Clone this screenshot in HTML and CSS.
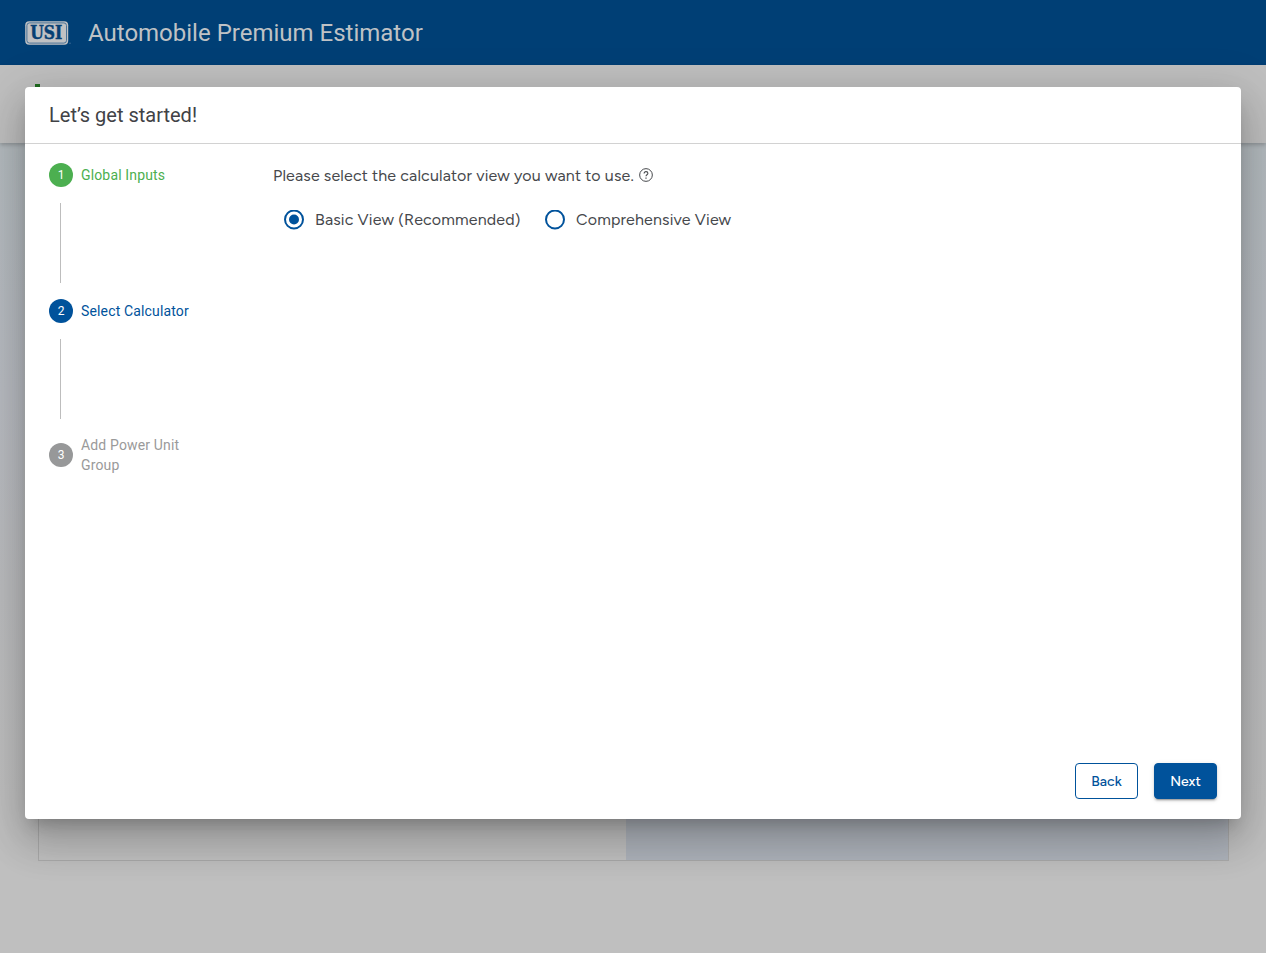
FILE: index.html
```html
<!DOCTYPE html>
<html lang="en">
<head>
<meta charset="utf-8">
<title>Automobile Premium Estimator</title>
<link rel="stylesheet" href="styles.css">
</head>
<body>
<div class="page">
  <header class="topbar">
    <svg class="logo" width="47" height="26" viewBox="0 0 47 26">
      <rect x="0.2" y="1.2" width="43" height="23.6" rx="4" fill="#c0c1c3"/>
      <rect x="1.9" y="2.9" width="39.6" height="20.2" rx="2.6" fill="none" stroke="#3c6a92" stroke-width="0.9"/>
      <text class="logo-text" x="5.2" y="19.4" textLength="32" lengthAdjust="spacingAndGlyphs">USI</text>
      <circle cx="45" cy="23.3" r="0.7" fill="#47719a"/>
    </svg>
    <h1 class="app-title">Automobile Premium Estimator</h1>
  </header>
  <div class="toolbar"><span class="accent"></span></div>
  <main class="content">
    <div class="panel"><div class="panel-left"></div><div class="panel-right"></div></div>
  </main>
</div>
<section class="dialog" role="dialog">
  <h2 class="dialog-title">Let’s get started!</h2>
  <div class="dialog-body">
    <ol class="steps">
      <li class="step done"><span class="num">1</span><span>Global Inputs</span></li>
      <li class="line"></li>
      <li class="step active"><span class="num">2</span><span>Select Calculator</span></li>
      <li class="line"></li>
      <li class="step pending"><span class="num">3</span><span>Add Power Unit Group</span></li>
    </ol>
    <div class="form">
      <div class="prompt"><span class="prompt-text">Please select the calculator view you want to use.</span>
        <svg width="14" height="14" viewBox="0 0 14 14" fill="none" stroke="#46484c"><circle cx="7" cy="7" r="6.35" stroke-width="1"/><path d="M5.1 5.5C5.1 4.3 5.9 3.6 7 3.6s1.9.7 1.9 1.7c0 1.4-1.9 1.5-1.9 3" stroke-width="1.05"/><path d="M7 9.5v1.2" stroke-width="1.2"/></svg>
      </div>
      <div class="options">
        <label class="option"><svg width="20" height="20" viewBox="0 0 20 20"><circle cx="10" cy="9.5" r="9" fill="none" stroke="#00529b" stroke-width="2"/><circle cx="10" cy="9.5" r="5" fill="#00529b"/></svg><span>Basic View (Recommended)</span></label>
        <label class="option"><svg width="20" height="20" viewBox="0 0 20 20"><circle cx="10" cy="9.5" r="9" fill="none" stroke="#00529b" stroke-width="2"/></svg><span>Comprehensive View</span></label>
      </div>
    </div>
  </div>
  <footer class="actions">
    <button class="btn outlined">Back</button>
    <button class="btn filled">Next</button>
  </footer>
</section>
</body>
</html>
```
FILE: styles.css
```css
* { box-sizing: border-box; }
body { margin: 0; font-family: Roboto, sans-serif; overflow: hidden; }
.page { height: 953px; display: flex; flex-direction: column; background: #bfbfbf; }
.topbar { height: 65px; flex: none; display: flex; align-items: center; gap: 16px; padding-left: 25px; background: #003f75; }
.logo { display: block; }
.logo-text { font: bold 18.5px "DejaVu Serif", serif; fill: #073f73; stroke: #073f73; stroke-width: .5; }
.app-title { margin: 0; font-size: 24px; font-weight: 400; line-height: 32px; color: #bfc2c5; }
.toolbar { height: 78px; flex: none; padding: 19px 0 0 35px; background: #bfbfbf; box-shadow: 0 2px 4px rgba(0,0,0,.2); z-index: 1; }
.accent { display: block; width: 5px; height: 6px; background: #1f6b20; }
.content { flex: 1; display: flex; flex-direction: column; padding: 0 37px 92px 38px; background: linear-gradient(#b3babe 0, #b8bbc1 250px, #bbbcbe 450px, #bfbfbf 660px); }
.panel { flex: 1; margin-top: 600px; display: flex; border: 1px solid #a9a9a9; }
.panel-left { width: 587px; background: #c0c0c0; }
.panel-right { flex: 1; background: #aeb3bb; }
.dialog { position: absolute; left: 25px; top: 87px; z-index: 2; width: 1216px; height: 732px; display: flex; flex-direction: column; background: #fff; border-radius: 4px; box-shadow: 0 11px 15px -7px rgba(0,0,0,.2), 0 24px 38px 3px rgba(0,0,0,.14), 0 9px 46px 8px rgba(0,0,0,.12); }
.dialog-title { margin: 0; height: 57px; flex: none; padding: 12px 24px; border-bottom: 1px solid #d2d2d2; font-size: 20px; font-weight: 400; line-height: 32px; color: #414246; }
.dialog-body { flex: 1; display: flex; padding: 19px 24px 0; }
.steps { width: 224px; margin: 0; padding: 0; list-style: none; }
.step { display: flex; align-items: center; gap: 8px; width: 150px; min-height: 24px; font-size: 14px; line-height: 20px; letter-spacing: .15px; }
.num { width: 24px; height: 24px; flex: none; border-radius: 50%; font-size: 12px; line-height: 24px; letter-spacing: 0; text-align: center; color: #fff; }
.line { width: 1px; height: 80px; margin: 16px 0 16px 11px; background: #bdbdbd; }
.done { color: #4caf50; }
.done .num { background: #4caf50; }
.active { color: #00529b; }
.active .num { background: #00529b; }
.pending { color: #9a9a9a; }
.pending .num { background: #979899; }
.form { color: #46484c; font: 16px/24px Figtree, Inter, sans-serif; letter-spacing: .15px; }
.prompt { display: flex; align-items: center; gap: 5px; height: 24px; }
.prompt-text { padding-top: 2px; white-space: nowrap; }
.options { display: flex; gap: 24.6px; margin: 20px 0 0 11px; }
.option { display: flex; align-items: center; gap: 11px; height: 26px; white-space: nowrap; }
.option svg { display: block; flex: none; }
.actions { display: flex; justify-content: flex-end; gap: 16px; padding: 0 24px 20px; }
.btn { width: 63px; height: 36px; padding: 2px 0 0; border: 1px solid #00529b; border-radius: 4px; font: 500 14px/32px Figtree, Inter, sans-serif; }
.outlined { color: #00529b; background: #fff; }
.filled { color: #fff; background: #00529b; box-shadow: 0 3px 1px -2px rgba(0,0,0,.2), 0 2px 2px rgba(0,0,0,.14), 0 1px 5px rgba(0,0,0,.12); }
```
